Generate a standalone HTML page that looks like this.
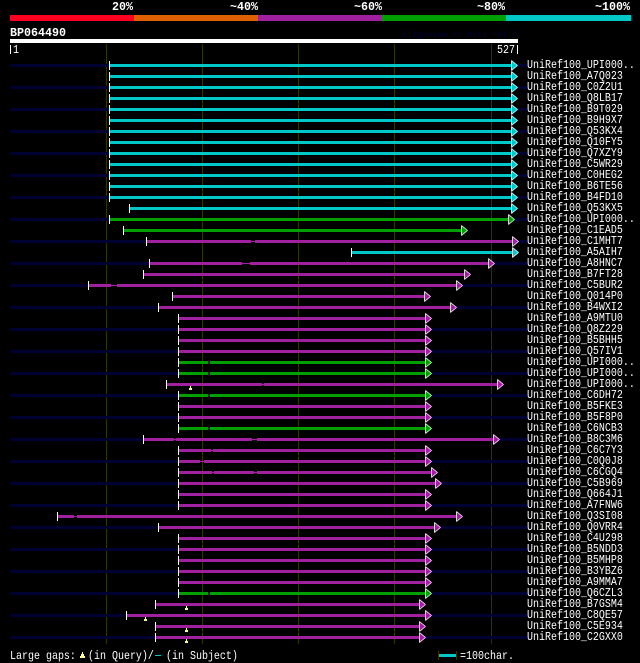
<!DOCTYPE html>
<html><head><meta charset="utf-8"><title>AlignView</title>
<style>
html,body{margin:0;padding:0;background:#000;width:640px;height:663px;overflow:hidden}
svg{display:block}
text{font-family:"Liberation Mono",monospace;font-size:12px;fill:#fff;white-space:pre;transform-box:fill-box;transform-origin:0 100%;transform:scaleX(.8333)}
text.b{font-weight:bold;font-size:11.67px;transform:none}
text.h{font-size:8.33px;fill:#000033;transform:none}
.f{fill:none}
.a{stroke:#fff;stroke-width:.8;stroke-linejoin:bevel}
</style></head><body>
<svg width="640" height="663" viewBox="0 0 640 663" xmlns="http://www.w3.org/2000/svg">
<rect width="640" height="663" fill="#000"/>
<rect x="10" y="15" width="124" height="6" fill="#ff0020"/>
<rect x="134" y="15" width="124" height="6" fill="#e06000"/>
<rect x="258" y="15" width="124" height="6" fill="#a020a0"/>
<rect x="382" y="15" width="124" height="6" fill="#00a000"/>
<rect x="506" y="15" width="125" height="6" fill="#00c8c8"/>
<rect x="10" y="39" width="508" height="4" fill="#fff"/>
<rect x="10" y="45" width="1" height="9" fill="#fff"/>
<rect x="517" y="45" width="1" height="9" fill="#fff"/>
<path class="f" stroke="#333300" stroke-width="1" d="M106.5 44V644M202.5 44V644M298.5 44V644M394.5 44V644M491.5 44V644"/>
<path fill="#000033" d="M10 64H109v3H10zM517 64H527v3H517zM10 86H109v3H10zM517 86H527v3H517zM10 108H109v3H10zM517 108H527v3H517zM10 130H109v3H10zM517 130H527v3H517zM10 152H109v3H10zM517 152H527v3H517zM10 174H109v3H10zM517 174H527v3H517zM10 196H109v3H10zM517 196H527v3H517zM10 218H109v3H10zM514 218H527v3H514zM10 240H146v3H10zM518 240H527v3H518zM10 262H149v3H10zM494 262H527v3H494zM10 284H88v3H10zM462 284H527v3H462zM10 306H158v3H10zM456 306H527v3H456zM10 328H178v3H10zM431 328H527v3H431zM10 350H178v3H10zM431 350H527v3H431zM10 372H178v3H10zM431 372H527v3H431zM10 394H178v3H10zM431 394H527v3H431zM10 416H178v3H10zM431 416H527v3H431zM10 438H143v3H10zM499 438H527v3H499zM10 460H178v3H10zM431 460H527v3H431zM10 482H178v3H10zM441 482H527v3H441zM10 504H178v3H10zM431 504H527v3H431zM10 526H158v3H10zM440 526H527v3H440zM10 548H178v3H10zM431 548H527v3H431zM10 570H178v3H10zM431 570H527v3H431zM10 592H178v3H10zM431 592H527v3H431zM10 614H126v3H10zM431 614H527v3H431zM10 636H155v3H10zM425 636H527v3H425z"/>
<path fill="#00c8c8" d="M110 64H511v3H110zM110 75H511v3H110zM110 86H511v3H110zM110 97H511v3H110zM110 108H511v3H110zM110 119H511v3H110zM110 130H511v3H110zM110 141H511v3H110zM110 152H511v3H110zM110 163H511v3H110zM110 174H511v3H110zM110 185H511v3H110zM110 196H511v3H110zM130 207H511v3H130zM352 251H512v3H352z"/>
<path fill="#00a000" d="M110 218H508v3H110zM124 229H461v3H124zM179 361H208v3H179zM210 361H425v3H210zM179 372H208v3H179zM210 372H425v3H210zM179 394H208v3H179zM210 394H425v3H210zM179 427H208v3H179zM210 427H425v3H210zM179 592H208v3H179zM210 592H425v3H210z"/>
<path class="f" stroke="#005000" stroke-width="1" d="M208 362.5H210M208 373.5H210M208 395.5H210M208 428.5H210M208 593.5H210"/>
<path fill="#a020a0" d="M147 240H251v3H147zM255 240H512v3H255zM150 262H242v3H150zM250 262H488v3H250zM144 273H464v3H144zM89 284H111v3H89zM117 284H456v3H117zM173 295H424v3H173zM159 306H450v3H159zM179 317H425v3H179zM179 328H425v3H179zM179 339H425v3H179zM179 350H425v3H179zM167 383H262v3H167zM264 383H497v3H264zM179 405H425v3H179zM179 416H425v3H179zM144 438H174v3H144zM176 438H252v3H176zM257 438H493v3H257zM179 449H211v3H179zM213 449H425v3H213zM179 460H200v3H179zM204 460H425v3H204zM179 471H212v3H179zM214 471H254v3H214zM257 471H431v3H257zM179 482H435v3H179zM179 493H425v3H179zM179 504H425v3H179zM58 515H74v3H58zM77 515H456v3H77zM159 526H434v3H159zM179 537H425v3H179zM179 548H425v3H179zM179 559H425v3H179zM179 570H425v3H179zM179 581H425v3H179zM156 603H419v3H156zM127 614H425v3H127zM156 625H419v3H156zM156 636H419v3H156z"/>
<path class="f" stroke="#a020a0" stroke-width="1" d="M251 241.5H255M242 263.5H250M111 285.5H117M262 384.5H264M174 439.5H176M252 439.5H257M211 450.5H213M200 461.5H204M212 472.5H214M254 472.5H257M74 516.5H77"/>
<path class="f" stroke="#fff" stroke-width="1" d="M109.5 61V70M109.5 72V81M109.5 83V92M109.5 94V103M109.5 105V114M109.5 116V125M109.5 127V136M109.5 138V147M109.5 149V158M109.5 160V169M109.5 171V180M109.5 182V191M109.5 193V202M129.5 204V213M109.5 215V224M123.5 226V235M146.5 237V246M351.5 248V257M149.5 259V268M143.5 270V279M88.5 281V290M172.5 292V301M158.5 303V312M178.5 314V323M178.5 325V334M178.5 336V345M178.5 347V356M178.5 358V367M178.5 369V378M166.5 380V389M178.5 391V400M178.5 402V411M178.5 413V422M178.5 424V433M143.5 435V444M178.5 446V455M178.5 457V466M178.5 468V477M178.5 479V488M178.5 490V499M178.5 501V510M57.5 512V521M158.5 523V532M178.5 534V543M178.5 545V554M178.5 556V565M178.5 567V576M178.5 578V587M178.5 589V598M155.5 600V609M126.5 611V620M155.5 622V631M155.5 633V642"/>
<path fill="#ffff99" d="M190 386h1v2h1v2h-3v-2h1zM186 606h1v2h1v2h-3v-2h1zM145 617h1v2h1v2h-3v-2h1zM186 628h1v2h1v2h-3v-2h1zM186 639h1v2h1v2h-3v-2h1z"/>
<path fill="#ffff99" d="M82 652h1v2h1v2h1v2h-5v-2h1v-2h1z"/>
<rect x="155" y="655" width="6" height="1" fill="#00c8c8"/>
<rect x="438" y="651" width="1" height="9" fill="#333300"/>
<rect x="456" y="651" width="1" height="9" fill="#333300"/>
<rect x="439" y="654" width="17" height="3" fill="#00c8c8"/>
<path class="a" fill="#00c8c8" d="M511.5 60.5v10l6-5zM511.5 71.5v10l6-5zM511.5 82.5v10l6-5zM511.5 93.5v10l6-5zM511.5 104.5v10l6-5zM511.5 115.5v10l6-5zM511.5 126.5v10l6-5zM511.5 137.5v10l6-5zM511.5 148.5v10l6-5zM511.5 159.5v10l6-5zM511.5 170.5v10l6-5zM511.5 181.5v10l6-5zM511.5 192.5v10l6-5zM511.5 203.5v10l6-5zM512.5 247.5v10l6-5z"/>
<path class="a" fill="#00a000" d="M508.5 214.5v10l6-5zM461.5 225.5v10l6-5zM425.5 357.5v10l6-5zM425.5 368.5v10l6-5zM425.5 390.5v10l6-5zM425.5 423.5v10l6-5zM425.5 588.5v10l6-5z"/>
<path class="a" fill="#a020a0" d="M512.5 236.5v10l6-5zM488.5 258.5v10l6-5zM464.5 269.5v10l6-5zM456.5 280.5v10l6-5zM424.5 291.5v10l6-5zM450.5 302.5v10l6-5zM425.5 313.5v10l6-5zM425.5 324.5v10l6-5zM425.5 335.5v10l6-5zM425.5 346.5v10l6-5zM497.5 379.5v10l6-5zM425.5 401.5v10l6-5zM425.5 412.5v10l6-5zM493.5 434.5v10l6-5zM425.5 445.5v10l6-5zM425.5 456.5v10l6-5zM431.5 467.5v10l6-5zM435.5 478.5v10l6-5zM425.5 489.5v10l6-5zM425.5 500.5v10l6-5zM456.5 511.5v10l6-5zM434.5 522.5v10l6-5zM425.5 533.5v10l6-5zM425.5 544.5v10l6-5zM425.5 555.5v10l6-5zM425.5 566.5v10l6-5zM425.5 577.5v10l6-5zM419.5 599.5v10l6-5zM425.5 610.5v10l6-5zM419.5 621.5v10l6-5zM419.5 632.5v10l6-5z"/>
<text class="b" x="112" y="10">20%</text>
<text class="b" x="230" y="10">~40%</text>
<text class="b" x="354" y="10">~60%</text>
<text class="b" x="477" y="10">~80%</text>
<text class="b" x="595" y="10">~100%</text>
<text class="b" x="10" y="36">BP064490</text>
<text class="h" x="402" y="37">AlignView.pm Beta rel.7</text>
<text x="13" y="53">1</text>
<text x="497" y="53">527</text>
<text x="527" y="68">UniRef100_UPI000..</text>
<text x="527" y="79">UniRef100_A7Q023</text>
<text x="527" y="90">UniRef100_C0Z2U1</text>
<text x="527" y="101">UniRef100_Q8LB17</text>
<text x="527" y="112">UniRef100_B9T029</text>
<text x="527" y="123">UniRef100_B9H9X7</text>
<text x="527" y="134">UniRef100_Q53KX4</text>
<text x="527" y="145">UniRef100_Q10FY5</text>
<text x="527" y="156">UniRef100_Q7XZY9</text>
<text x="527" y="167">UniRef100_C5WR29</text>
<text x="527" y="178">UniRef100_C0HEG2</text>
<text x="527" y="189">UniRef100_B6TE56</text>
<text x="527" y="200">UniRef100_B4FD10</text>
<text x="527" y="211">UniRef100_Q53KX5</text>
<text x="527" y="222">UniRef100_UPI000..</text>
<text x="527" y="233">UniRef100_C1EAD5</text>
<text x="527" y="244">UniRef100_C1MHT7</text>
<text x="527" y="255">UniRef100_A5AIH7</text>
<text x="527" y="266">UniRef100_A8HNC7</text>
<text x="527" y="277">UniRef100_B7FT28</text>
<text x="527" y="288">UniRef100_C5BUR2</text>
<text x="527" y="299">UniRef100_Q014P0</text>
<text x="527" y="310">UniRef100_B4WXI2</text>
<text x="527" y="321">UniRef100_A9MTU0</text>
<text x="527" y="332">UniRef100_Q8Z229</text>
<text x="527" y="343">UniRef100_B5BHH5</text>
<text x="527" y="354">UniRef100_Q57IV1</text>
<text x="527" y="365">UniRef100_UPI000..</text>
<text x="527" y="376">UniRef100_UPI000..</text>
<text x="527" y="387">UniRef100_UPI000..</text>
<text x="527" y="398">UniRef100_C6DH72</text>
<text x="527" y="409">UniRef100_B5FKE3</text>
<text x="527" y="420">UniRef100_B5F8P0</text>
<text x="527" y="431">UniRef100_C6NCB3</text>
<text x="527" y="442">UniRef100_B8C3M6</text>
<text x="527" y="453">UniRef100_C6C7Y3</text>
<text x="527" y="464">UniRef100_C0Q0J8</text>
<text x="527" y="475">UniRef100_C6CGQ4</text>
<text x="527" y="486">UniRef100_C5B969</text>
<text x="527" y="497">UniRef100_Q664J1</text>
<text x="527" y="508">UniRef100_A7FNW6</text>
<text x="527" y="519">UniRef100_Q3SI08</text>
<text x="527" y="530">UniRef100_Q0VRR4</text>
<text x="527" y="541">UniRef100_C4U298</text>
<text x="527" y="552">UniRef100_B5NDD3</text>
<text x="527" y="563">UniRef100_B5MHP8</text>
<text x="527" y="574">UniRef100_B3YBZ6</text>
<text x="527" y="585">UniRef100_A9MMA7</text>
<text x="527" y="596">UniRef100_Q6CZL3</text>
<text x="527" y="607">UniRef100_B7GSM4</text>
<text x="527" y="618">UniRef100_C8QE57</text>
<text x="527" y="629">UniRef100_C5E934</text>
<text x="527" y="640">UniRef100_C2GXX0</text>
<text x="10" y="659">Large gaps:</text>
<text x="88" y="659">(in Query)/</text>
<text x="166" y="659">(in Subject)</text>
<text x="460" y="659">=100char.</text>
</svg>
</body></html>
